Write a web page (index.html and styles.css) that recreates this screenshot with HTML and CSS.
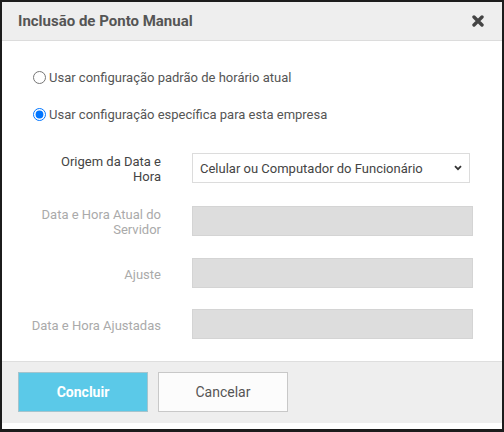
FILE: index.html
```html
<!DOCTYPE html>
<html lang="pt-BR">
<head>
<meta charset="utf-8">
<title>Inclusão de Ponto Manual</title>
<link rel="stylesheet" href="styles.css">
</head>
<body>
<div class="dialog">
  <div class="header">
    <h1 class="title">Inclusão de Ponto Manual</h1>
    <button class="close" aria-label="Fechar">
      <svg width="12" height="12" viewBox="0 0 12 12"><path d="M2 2L10 10M10 2L2 10" stroke="#444" stroke-width="3.4" stroke-linecap="round"/></svg>
    </button>
  </div>
  <div class="body">
    <div class="radios">
      <label class="radio"><input type="radio" name="cfg"> Usar configuração padrão de horário atual</label>
      <label class="radio"><input type="radio" name="cfg" checked> Usar configuração específica para esta empresa</label>
    </div>
    <div class="form">
      <div class="row">
        <label class="lbl">Origem da Data e Hora</label>
        <div class="select-wrap">
          <select class="select"><option>Celular ou Computador do Funcionário</option></select>
          <svg class="chev" width="8" height="6" viewBox="0 0 8 6"><path d="M1 1.2L4 4.2L7 1.2" fill="none" stroke="#333" stroke-width="1.8"/></svg>
        </div>
      </div>
      <div class="row">
        <label class="lbl off">Data e Hora Atual do Servidor</label>
        <input class="inp" type="text" disabled>
      </div>
      <div class="row">
        <label class="lbl off">Ajuste</label>
        <input class="inp" type="text" disabled>
      </div>
      <div class="row">
        <label class="lbl off">Data e Hora Ajustadas</label>
        <input class="inp" type="text" disabled>
      </div>
    </div>
  </div>
  <div class="footer">
    <button class="btn primary">Concluir</button>
    <button class="btn">Cancelar</button>
  </div>
</div>
</body>
</html>
```
FILE: styles.css
```css
* { box-sizing: border-box; }
html, body { margin: 0; padding: 0; background: #fff; }
body { font-family: Roboto, "Liberation Sans", Arial, sans-serif; }

.dialog {
  width: 504px;
  height: 432px;
  border: 2px solid #1c1c1c;
  border-bottom-width: 3px;
  background: #fff;
  display: flex;
  flex-direction: column;
}

.header {
  height: 39px;
  flex: none;
  background: #eeeeee;
  border-bottom: 1px solid #dcdcdc;
  display: flex;
  align-items: center;
  justify-content: space-between;
  padding: 0 18px 0 16px;
}
.title {
  margin: 0;
  font-size: 15px;
  font-weight: 700;
  color: #555;
}
.close {
  border: 0;
  background: none;
  padding: 0;
  width: 12px;
  height: 12px;
  display: flex;
}

.body {
  flex: 1;
  padding: 28px 29px 0 26px;
}
.radios {
  display: flex;
  flex-direction: column;
  gap: 20px;
}
.radio {
  display: flex;
  align-items: center;
  font-size: 13px;
  color: #555;
  line-height: 17px;
}
.radio input {
  margin: 0 3px 0 5px;
  width: 13px;
  height: 13px;
}

.form {
  margin-top: 29px;
  display: flex;
  flex-direction: column;
  gap: 21px;
  padding-left: 3.4px;
}
.row {
  display: flex;
  align-items: center;
  gap: 31px;
}
.lbl {
  width: 129.6px;
  flex: none;
  text-align: right;
  font-size: 13px;
  font-weight: 400;
  line-height: 15px;
  color: #444;
  padding-top: 2px;
}
.lbl.off { color: #aaa; }

.select-wrap {
  position: relative;
  width: 278px;
  height: 30px;
}
.select {
  appearance: none;
  -webkit-appearance: none;
  width: 100%;
  height: 30px;
  border: 1px solid #dcdcdc;
  background: #fff;
  border-radius: 0;
  font-family: inherit;
  font-size: 13px;
  color: #444;
  padding: 0 0 0 7px;
  outline: none;
}
.chev {
  position: absolute;
  right: 8px;
  top: 12px;
  pointer-events: none;
}

.inp {
  width: 281px;
  height: 30px;
  border: 1px solid #d4d4d4;
  background: #dddddd;
  border-radius: 0;
  outline: none;
}

.footer {
  flex: none;
  height: 62px;
  margin-bottom: 6px;
  background: #eeeeee;
  border-top: 1px solid #dedede;
  display: flex;
  gap: 10px;
  padding: 10px 0 0 16px;
}
.btn {
  width: 130px;
  height: 40px;
  border: 1px solid #c8c8c8;
  background: #fcfcfc;
  font-family: inherit;
  font-size: 14px;
  font-weight: 400;
  color: #555;
  border-radius: 0;
  padding: 0;
}
.btn.primary {
  background: #5bc9e8;
  border-color: #a5c4cd;
  color: #fff;
  font-weight: 700;
}
```
